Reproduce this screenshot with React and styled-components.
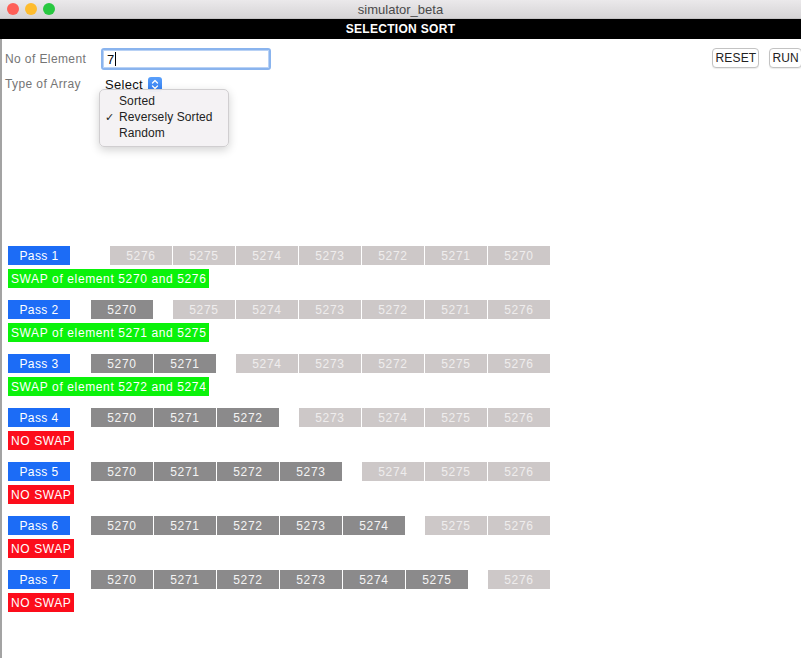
import React from 'react'
import styled, { createGlobalStyle } from 'styled-components';

const Global = createGlobalStyle`
html, body { margin: 0; padding: 0; background: #fff; }
body { font-family: "Liberation Sans", Arial, sans-serif; }
`;

const Window = styled.div`
width: 801px;
height: 658px;
overflow: hidden;
background: #fff;
display: flex;
flex-direction: column;
`;

const TitleBar = styled.div`
height: 19px;
flex-shrink: 0;
position: relative;
display: flex;
align-items: center;
justify-content: center;
background: linear-gradient(#ebe9eb, #d6d4d6);
border-bottom: 1px solid #c4c2c4;
box-sizing: border-box;
font-size: 13px;
color: #4a4a4a;
`;

const Lights = styled.div`
position: absolute;
left: 7px;
top: 3px;
display: flex;
gap: 6px;
`;

const Light = styled.span`
width: 12px;
height: 12px;
border-radius: 50%;
background: ${({c}) => c};
`;

const Header = styled.div`
height: 20px;
flex-shrink: 0;
background: #000;
color: #fff;
font-weight: bold;
font-size: 12px;
display: flex;
align-items: center;
justify-content: center;
letter-spacing: 0.3px;
`;

const Body = styled.div`
flex: 1;
border-left: 2px solid #a3a3a3;
display: flex;
flex-direction: column;
`;

const Top = styled.div`
display: flex;
justify-content: space-between;
padding: 9px 0 0 3px;
`;

const Form = styled.div`
display: flex;
flex-direction: column;
gap: 5px;
`;

const Field = styled.div`
display: flex;
align-items: center;
height: ${({h}) => h}px;
`;

const Label = styled.label`
width: 96px;
font-size: 12px;
color: #757575;
letter-spacing: 0.4px;
`;

const Input = styled.div`
width: 170px;
height: 22px;
box-sizing: border-box;
border: 2px solid #8ab4ee;
border-radius: 3px;
box-shadow: inset 0 0 0 1px #b9d2f5;
font-size: 13px;
display: flex;
align-items: center;
padding-left: 4px;
color: #111;
`;

const Caret = styled.span`
width: 1px;
height: 14px;
background: #000;
margin-left: 1px;
`;

const SelectWrap = styled.div`
position: relative;
display: flex;
align-items: center;
gap: 5px;
font-size: 13px;
letter-spacing: 0.3px;
color: #111;
padding-left: 4px;
`;

const Stepper = styled.span`
width: 14px;
height: 15px;
border-radius: 3px;
background: linear-gradient(#5aa0fb, #2f7cf2);
display: flex;
align-items: center;
justify-content: center;
`;

const Menu = styled.div`
position: absolute;
left: -2px;
top: 12px;
width: 130px;
box-sizing: border-box;
padding: 3px 0 5px;
background: rgba(244, 242, 244, 0.97);
border: 1px solid #d0ced0;
border-radius: 5px;
box-shadow: 0 3px 10px rgba(0,0,0,0.18);
z-index: 2;
letter-spacing: 0.1px;
`;

const MenuItem = styled.div`
position: relative;
height: 16px;
line-height: 16px;
padding-left: 19px;
font-size: 12px;
color: #222;
`;

const Check = styled.span`
position: absolute;
left: 5px;
top: 0;
font-size: 11px;
`;

const Buttons = styled.div`
display: flex;
gap: 10px;
margin-right: -1px;
`;

const Button = styled.button`
height: 20px;
box-sizing: border-box;
padding: 0 2px;
margin: 0;
background: #fff;
border: 1px solid #c3c3c3;
border-radius: 4px;
font-family: inherit;
font-size: 12px;
letter-spacing: 0.2px;
color: #222;
box-shadow: 0 1px 1px rgba(0,0,0,0.08);
`;

const Passes = styled.div`
margin-top: 153px;
padding-left: 6px;
display: flex;
flex-direction: column;
gap: 12px;
`;

const Pass = styled.div`
display: flex;
flex-direction: column;
gap: 4px;
`;

const Row = styled.div`
display: flex;
height: 19px;
`;

const PassLabel = styled.div`
width: 62px;
margin-right: 21px;
background: #1c6cf6;
color: #fff;
font-size: 12px;
letter-spacing: 0.4px;
display: flex;
align-items: center;
justify-content: center;
`;

const Cell = styled.div`
width: 62px;
margin-right: 1px;
background: ${({done}) => done ? '#8b8a8b' : '#cdc8c8'};
color: ${({done}) => done ? '#f4f4f4' : '#efeded'};
font-size: 12px;
letter-spacing: 0.7px;
display: flex;
align-items: center;
justify-content: center;
`;

const Spacer = styled.div`
width: 19px;
`;

const Status = styled.div`
align-self: flex-start;
height: 19px;
padding: 0 3px;
background: ${({swap}) => swap ? '#0af20a' : '#fc0d1b'};
color: #fff;
font-size: 12px;
letter-spacing: ${({swap}) => swap ? '0.62px' : '0.6px'};
display: flex;
align-items: center;
`;

const Chevrons = () => (
  <svg width="8" height="11" viewBox="0 0 8 11">
    <path d="M1.5 4 L4 1.5 L6.5 4 M1.5 7 L4 9.5 L6.5 7" stroke="#fff" strokeWidth="1.3" fill="none" strokeLinecap="round" strokeLinejoin="round" />
  </svg>
);

const buildPasses = () => {
  const arr = [5276, 5275, 5274, 5273, 5272, 5271, 5270];
  const passes = [];
  for (let i = 0; i < arr.length; i++) {
    const snapshot = [...arr];
    let min = i;
    for (let j = i + 1; j < arr.length; j++) if (arr[j] < arr[min]) min = j;
    let msg = null;
    if (min !== i) {
      msg = `SWAP of element ${arr[min]} and ${arr[i]}`;
      [arr[i], arr[min]] = [arr[min], arr[i]];
    }
    passes.push({ values: snapshot, sorted: i, msg });
  }
  return passes;
};

const App = () => {
  const passes = buildPasses();
  return (
    <Window>
      <Global />
      <TitleBar>
        <Lights>
          <Light c="#fe5f57" />
          <Light c="#febc2e" />
          <Light c="#28c840" />
        </Lights>
        simulator_beta
      </TitleBar>
      <Header>SELECTION SORT</Header>
      <Body>
        <Top>
          <Form>
            <Field h={22}>
              <Label>No of Element</Label>
              <Input>7<Caret /></Input>
            </Field>
            <Field h={18}>
              <Label>Type of Array</Label>
              <SelectWrap>
                Select
                <Stepper><Chevrons /></Stepper>
                <Menu>
                  <MenuItem>Sorted</MenuItem>
                  <MenuItem><Check>✓</Check>Reversely Sorted</MenuItem>
                  <MenuItem>Random</MenuItem>
                </Menu>
              </SelectWrap>
            </Field>
          </Form>
          <Buttons>
            <Button>RESET</Button>
            <Button>RUN</Button>
          </Buttons>
        </Top>
        <Passes>
          {passes.map((p, i) => (
            <Pass key={i}>
              <Row>
                <PassLabel>Pass {i + 1}</PassLabel>
                {p.values.slice(0, p.sorted).map(v => <Cell key={v} done>{v}</Cell>)}
                <Spacer />
                {p.values.slice(p.sorted).map(v => <Cell key={v}>{v}</Cell>)}
              </Row>
              <Status swap={!!p.msg}>{p.msg || 'NO SWAP'}</Status>
            </Pass>
          ))}
        </Passes>
      </Body>
    </Window>
  )
}

export default App
